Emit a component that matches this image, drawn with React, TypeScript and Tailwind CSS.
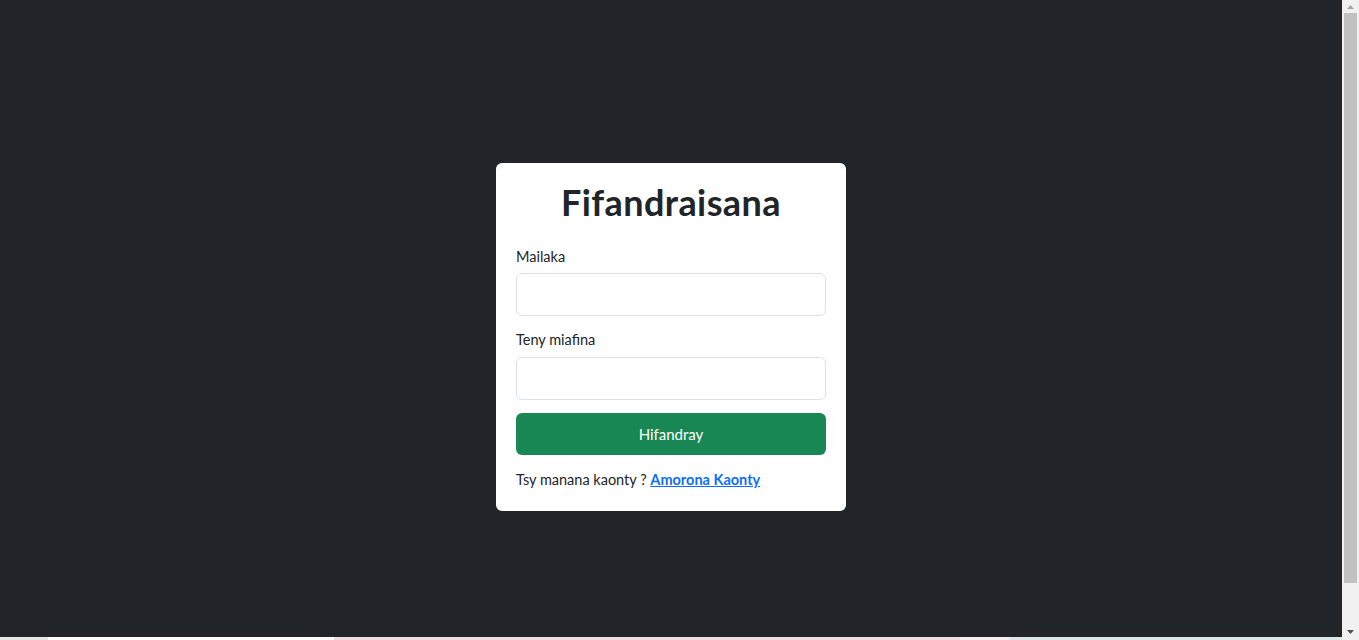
import React from 'react';

function Scrollbar() {
  return (
    <div className="w-[17px] h-full bg-[#f1f1f1] flex flex-col items-center">
      <div className="h-[13px] w-full flex items-center justify-center">
        <svg width="7" height="4" viewBox="0 0 7 4"><path d="M3.5 0L7 4H0z" fill="#a3a3a3" /></svg>
      </div>
      <div className="w-[13px] h-[570px] bg-[#c1c1c1]" />
      <div className="flex-1" />
      <div className="h-[17px] w-full flex items-center justify-center">
        <svg width="7" height="4" viewBox="0 0 7 4"><path d="M0 0H7L3.5 4z" fill="#505050" /></svg>
      </div>
    </div>
  );
}

export default function App() {
  return (
    <div className="h-screen flex overflow-hidden font-['Lato','Noto_Sans',sans-serif] text-[#212529]">
      <div className="flex-1 flex flex-col">
        <div className="h-[637px] bg-[#212529] flex justify-center pt-[163px]">
          <div className="w-[350px] h-[348px] bg-white rounded-[6px] px-5 pt-5">
            <h1 className="text-[36px] leading-[38px] font-bold text-center tracking-[0.4px] mb-6">Fifandraisana</h1>
            <form onSubmit={e => e.preventDefault()}>
              <label className="block text-[14.5px] leading-[23px] mb-[5px]">Mailaka</label>
              <input type="email" className="block w-full h-[43px] rounded-[6px] border border-[#dee2e6] px-3 outline-none mb-3" />
              <label className="block text-[14.5px] leading-[24px] mb-[5px]">Teny miafina</label>
              <input type="password" className="block w-full h-[43px] rounded-[6px] border border-[#dee2e6] px-3 outline-none mb-[13px]" />
              <button type="submit" className="block w-full h-[42px] rounded-[6px] bg-[#198754] text-white text-[15px] mb-[13px]">Hifandray</button>
              <p className="text-[14.5px] leading-[24px]">
                Tsy manana kaonty ? <a href="#" className="font-bold text-[#0d6efd] underline">Amorona Kaonty</a>
              </p>
            </form>
          </div>
        </div>
        {/* bout d'image qui dépasse en bas */}
        <div className="flex-1 flex">
          <div className="w-[48px] bg-[#e5e9e7]" />
          <div className="w-[286px] bg-white" />
          <div className="w-[626px] bg-[#f0dde0]" />
          <div className="w-[50px] bg-[#f7eef1]" />
          <div className="flex-1 bg-[#dde8e6]" />
        </div>
      </div>
      <Scrollbar />
    </div>
  );
}
